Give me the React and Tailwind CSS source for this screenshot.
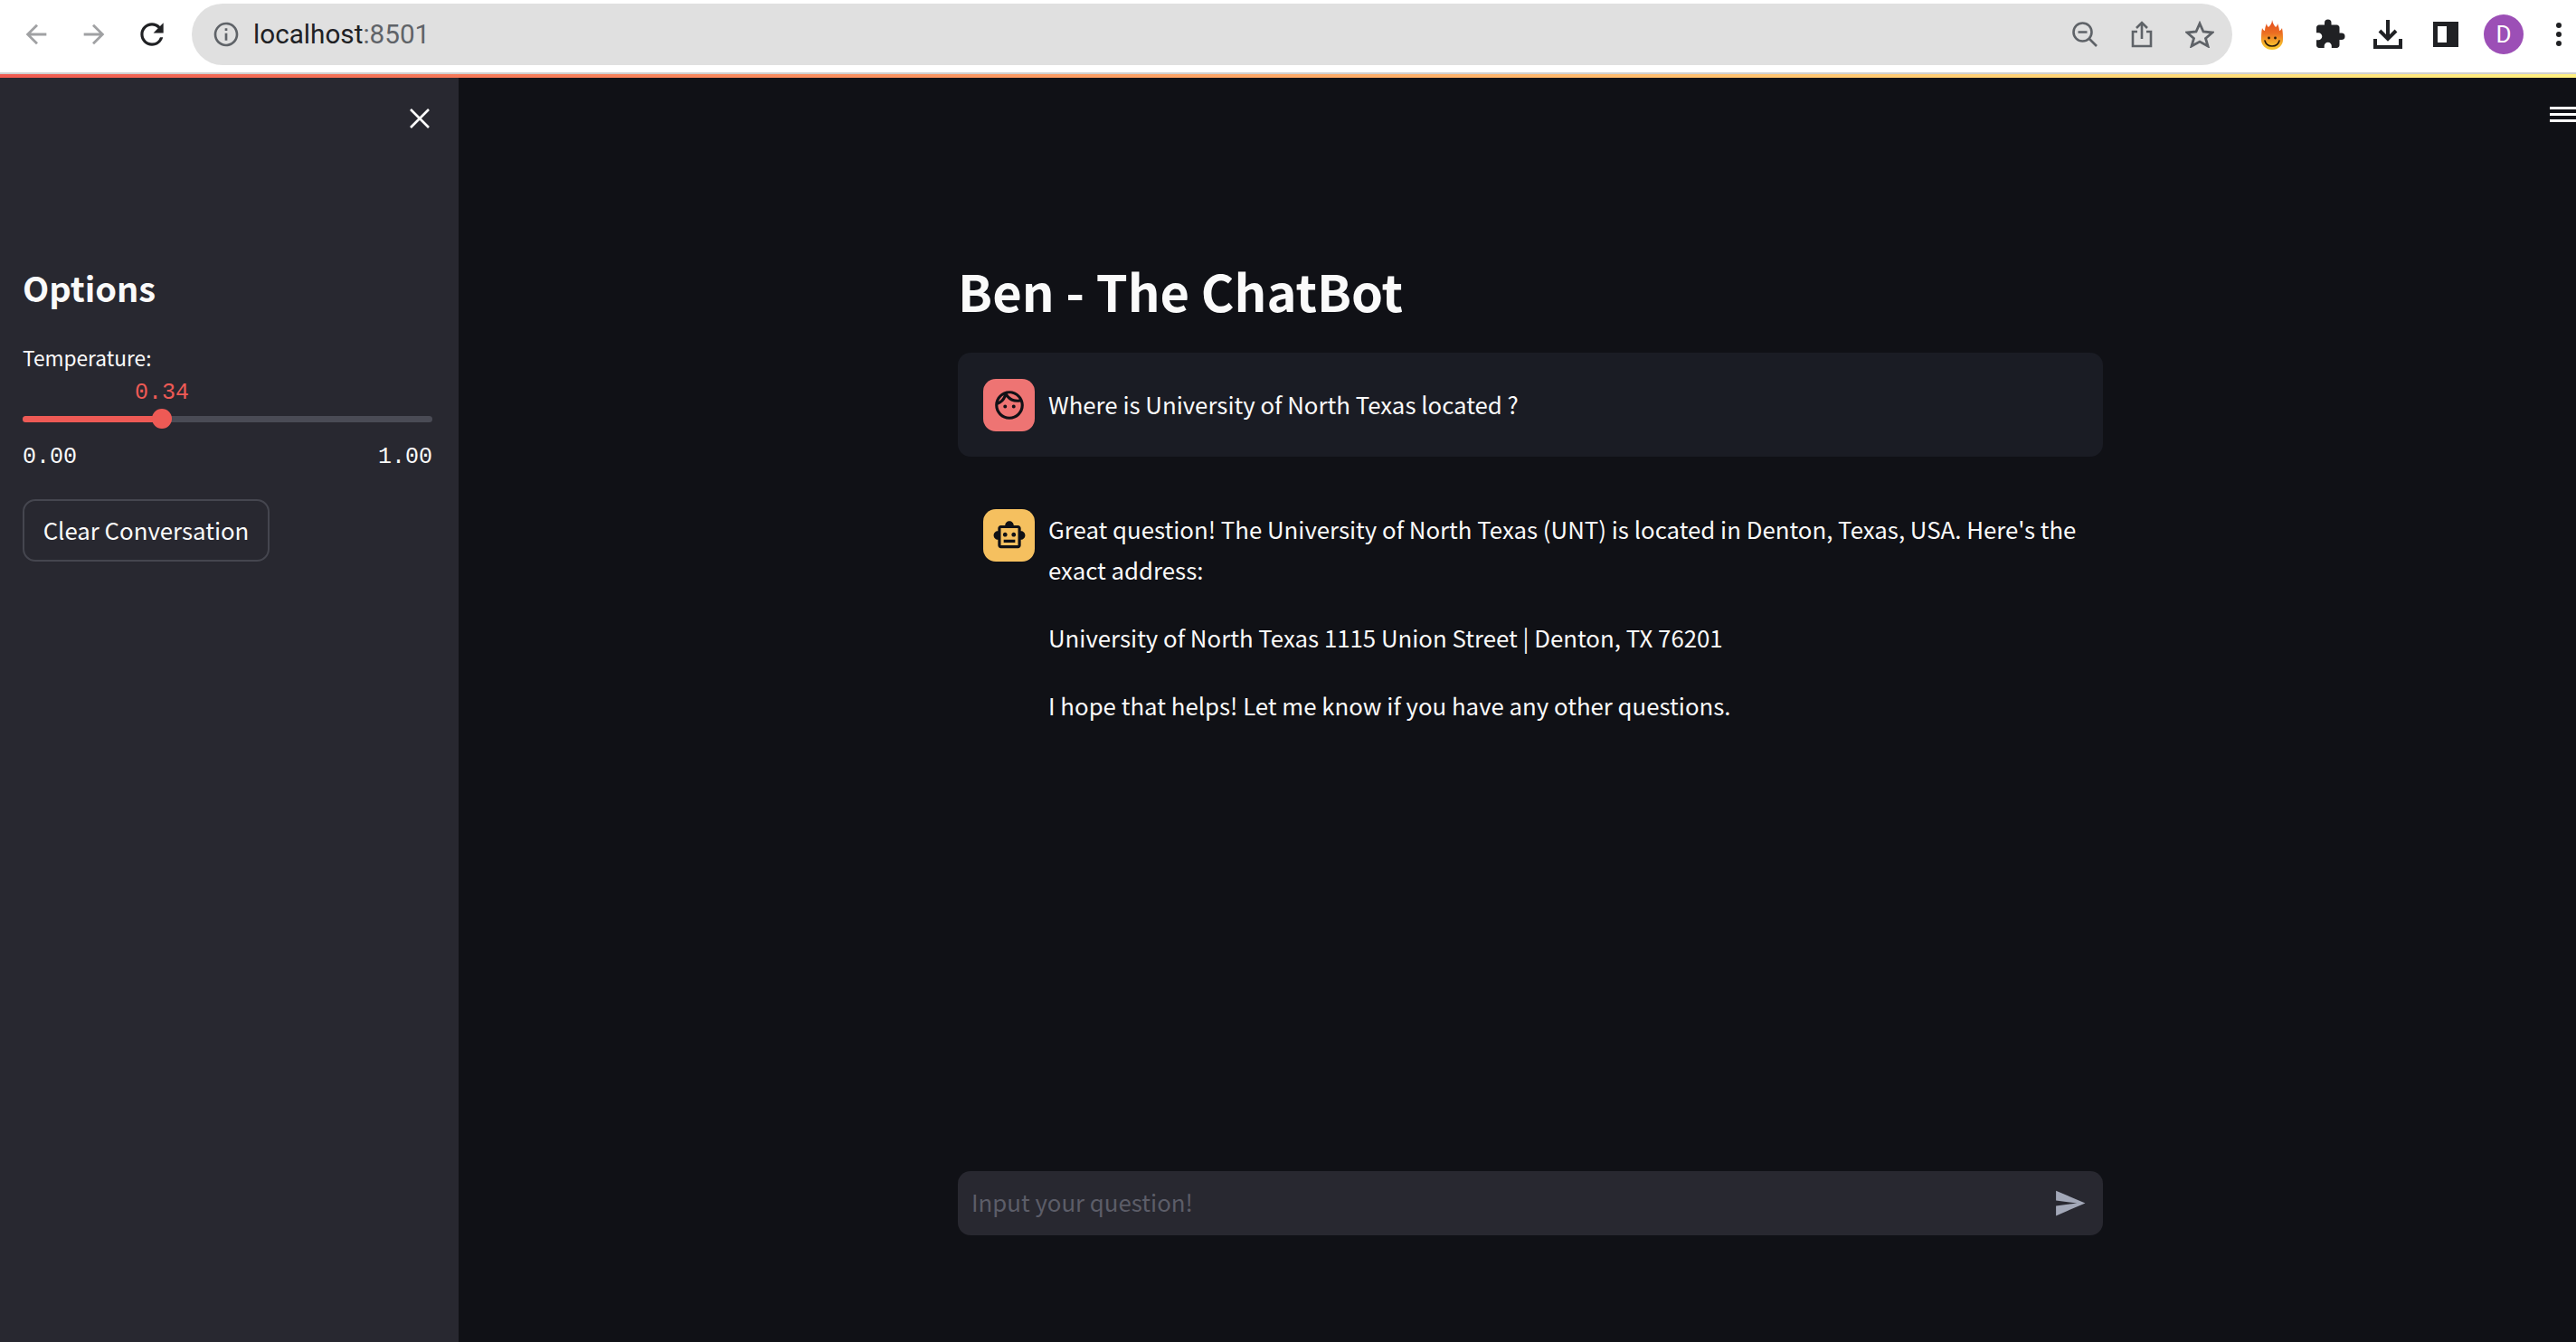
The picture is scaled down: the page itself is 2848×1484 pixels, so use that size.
import { MdArrowBack, MdArrowForward, MdRefresh, MdInfoOutline, MdExtension, MdOutlineSmartToy, MdOutlineFace, MdSend } from 'react-icons/md';

const FlameIcon = () => (
  <svg width="24" height="33" viewBox="0 0 24 33">
    <defs>
      <linearGradient id="flame" x1="0" y1="0" x2="0" y2="1">
        <stop offset="0" stopColor="#e2481c" />
        <stop offset="0.45" stopColor="#ec6f22" />
        <stop offset="0.8" stopColor="#f6b42c" />
        <stop offset="1" stopColor="#f9c82f" />
      </linearGradient>
    </defs>
    <path d="M12 0c1 4 2 6 4 8 1-1 2-2 2-4 1 3 2 5 2 8 1 0 2-1 3-3 1 5 1 9 1 13 0 6-5 11-12 11S0 28 0 22C0 18 0 14 1 9c1 2 2 3 3 3 0-3 1-6 2-8 0 2 1 3 2 4 2-2 4-4 4-8z" fill="url(#flame)" />
    <circle cx="8.500" cy="20" r="1.400" fill="#2a1a0a" />
    <circle cx="15.500" cy="20" r="1.400" fill="#2a1a0a" />
    <path d="M4 23c1 4 4 6 8 6s7-2 8-6" stroke="#2a1a0a" strokeWidth="1.600" fill="none" strokeLinecap="round" />
  </svg>
);

const BrowserBar = () => (
  <div className="flex h-[80px] items-center bg-white pb-[4px] pl-[23px] pr-[13px]">
    <MdArrowBack size={34} className="text-[#a0a1a3]" />
    <MdArrowForward size={34} className="ml-[30px] text-[#a0a1a3]" />
    <MdRefresh size={38} className="ml-[28px] text-[#202124]" />

    <div className="ml-[25px] flex h-[68px] w-[2256px] items-center rounded-full bg-[#e0e0e0] pl-[22px] pr-[20px]">
      <MdInfoOutline size={32} className="text-[#5f6368]" />
      <span className="ml-[14px] font-['Roboto',sans-serif] text-[29.700px] leading-none text-[#202124]">
        localhost<span className="text-[#5f6368]">:8501</span>
      </span>
      <div className="ml-auto flex items-center gap-[36px] text-[#5f6368]">
        <svg width="30" height="30" viewBox="0 0 30 30" fill="none" stroke="currentColor" strokeWidth="2.6">
          <circle cx="12.5" cy="12.5" r="10" />
          <path d="M7.500 12.500h10M20 20l8 8" />
        </svg>
        <svg width="24" height="30" viewBox="0 0 24 30" fill="none" stroke="currentColor" strokeWidth="2.6">
          <path d="M12 20V2M6 8l6-6 6 6M7 12H2v16h20V12h-5" />
        </svg>
        <svg width="32" height="30" viewBox="0 0 32 30" fill="none" stroke="currentColor" strokeWidth="2.8">
          <path d="M16 3l4 9 10 1-7.500 6.500L25 28l-9-5-9 5 2.500-8.500L2 13l10-1z" />
        </svg>
      </div>
    </div>

    <div className="ml-[32px] flex items-center">
      <FlameIcon />
      <MdExtension size={36} className="ml-[34px] text-[#202124]" />
      <svg width="32" height="32" viewBox="0 0 32 32" className="ml-[30px] text-[#202124]" fill="none" stroke="currentColor" strokeWidth="4">
        <path d="M16 0v19M7 12l9 9 9-9M2 21v9h28v-9" />
      </svg>
      <div className="ml-[34px] h-[28px] w-[28px] border-[5px] border-r-[13px] border-[#202124]" />
      <div className="ml-[28px] flex h-[44px] w-[44px] items-center justify-center rounded-full bg-[#9c4fb6] font-['Roboto',sans-serif] text-[26px] text-white">
        D
      </div>
      <div className="ml-[36px] flex flex-col gap-[4px]">
        <div className="h-[6px] w-[6px] rounded-full bg-[#202124]" />
        <div className="h-[6px] w-[6px] rounded-full bg-[#202124]" />
        <div className="h-[6px] w-[6px] rounded-full bg-[#202124]" />
      </div>
    </div>
  </div>
);

const Sidebar = () => (
  <aside className="flex w-[507px] shrink-0 flex-col bg-[#282830] pl-[25px] pr-[29px]">
    <div className="flex justify-end pt-[34px] pr-[3px]">
      <svg width="22" height="22" viewBox="0 0 22 22" stroke="white" strokeWidth="2.6">
        <path d="M1 1l20 20M21 1L1 21" />
      </svg>
    </div>
    <h2 className="mt-[148px] text-[38px] font-bold leading-[56px] text-[#fafafa]">Options</h2>
    <div className="mt-[32px] text-[22.700px] leading-[36px] text-[#fafafa]">Temperature:</div>

    {/* Slider */}
    <div className="relative mt-[46px] h-[7px] rounded-full bg-[#4a4b55]">
      <div className="h-full w-[154px] rounded-full bg-[#ee5a55]" />
      <div className="absolute left-[143px] top-[-8px] h-[22px] w-[22px] rounded-full bg-[#ee5a55]" />
      <div className="absolute left-[124px] top-[-39px] font-['Liberation_Mono',monospace] text-[25px] leading-[28px] text-[#ee5a55]">0.34</div>
    </div>
    <div className="mt-[25px] flex justify-between font-['Liberation_Mono',monospace] text-[25px] leading-[28px] text-[#fafafa]">
      <span>0.00</span>
      <span>1.00</span>
    </div>

    <button className="mt-[32px] h-[69px] w-[273px] rounded-[14px] border-2 border-[#45464f] pb-[2px] text-[25.800px] leading-none text-[#fafafa]">
      Clear Conversation
    </button>
  </aside>
);

const Avatar = ({ color, children }) => (
  <div className={`flex h-[58px] w-[57px] shrink-0 items-center justify-center rounded-[14px] ${color}`}>
    {children}
  </div>
);

const ChatMain = () => (
  <main className="flex min-w-0 flex-1 flex-col bg-[#101116] pl-[552px] pr-[523px] pb-[118px]">
    <h1 className="mt-[196px] text-[56px] font-bold leading-[78px] text-[#fafafa]">Ben - The ChatBot</h1>

    <div className="mt-[30px] flex h-[115px] items-center gap-[15px] rounded-[14px] bg-[#1a1c24] px-[28px]">
      <Avatar color="bg-[#ee7473]">
        <MdOutlineFace size={38} className="text-[#101116]" />
      </Avatar>
      <p className="pb-[2px] text-[25.800px] leading-[45px] text-[#fafafa]">Where is University of North Texas located ?</p>
    </div>

    <div className="mt-[58px] flex gap-[15px] px-[28px]">
      <Avatar color="bg-[#f5c05f]">
        <MdOutlineSmartToy size={38} className="text-[#101116]" />
      </Avatar>
      <div className="-mt-[1px] text-[25.800px] leading-[45px] text-[#fafafa]">
        <p>Great question! The University of North Texas (UNT) is located in Denton, Texas, USA. Here's the exact address:</p>
        <p className="mt-[30px]">University of North Texas 1115 Union Street | Denton, TX 76201</p>
        <p className="mt-[30px]">I hope that helps! Let me know if you have any other questions.</p>
      </div>
    </div>

    <div className="mt-auto flex h-[71px] items-center rounded-[14px] bg-[#282830] pl-[15px] pr-[18px]">
      <input
        className="min-w-0 flex-1 bg-transparent pb-[3px] text-[25.800px] text-[#fafafa] outline-none placeholder:text-[#5c5d68]"
        placeholder="Input your question!"
      />
      <MdSend size={37} className="text-[#a3a8b8]" />
    </div>
  </main>
);

const App = () => (
  <div className="relative flex h-[1484px] w-[2848px] flex-col overflow-hidden bg-[#101116] font-['Noto_Sans_CJK_SC',sans-serif]">
    <BrowserBar />
    <div className="h-[2px] bg-[#d0d0d0]" />
    <div className="h-[4px] bg-gradient-to-r from-[#f05a50] to-[#fff080]" />
    <div className="flex min-h-0 flex-1">
      <Sidebar />
      <ChatMain />
    </div>
    {/* Streamlit menu, cut off by the window edge */}
    <div className="absolute left-[2819px] top-[118px] flex w-[32px] flex-col gap-[4px]">
      <div className="h-[3px] bg-white" />
      <div className="h-[3px] bg-white" />
      <div className="h-[3px] bg-white" />
    </div>
  </div>
);

export default App;
